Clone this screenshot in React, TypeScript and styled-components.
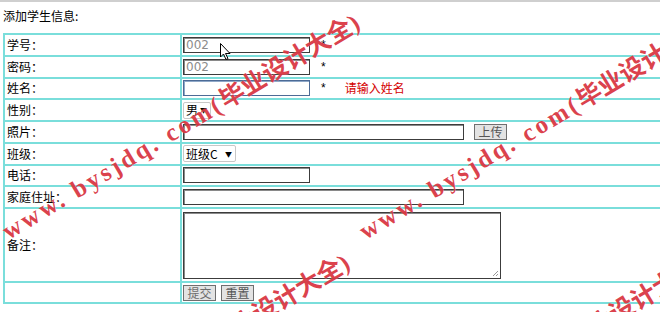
import React from "react";
import styled, { createGlobalStyle } from "styled-components";

const lineColor = "#7adedb";
const cjk = `"Noto Sans CJK SC", "Liberation Sans", sans-serif`;

const GlobalStyle = createGlobalStyle`
  html, body {
    margin: 0;
    padding: 0;
    background: #fff;
    overflow: hidden;
  }
  body {
    font-family: ${cjk};
    font-size: 12px;
    color: #000;
  }
`;

const Page = styled.div`
  position: relative;
  width: 660px;
  height: 312px;
  overflow: hidden;
  border-top: 2px solid #cfcfcf;
  box-sizing: border-box;
  padding-left: 3px;
`;

const Title = styled.div`
  height: 31px;
  line-height: 28px;
  font-size: 12px;
`;

const FormTable = styled.table`
  width: 820px;
  border: 1px solid ${lineColor};
  border-spacing: 0;
  border-collapse: separate;
`;

const Row = styled.tr<{ $h?: number }>`
  height: ${(p) => p.$h ?? 21.75}px;
`;

const LabelCell = styled.td`
  width: 173px;
  border: 1px solid ${lineColor};
  padding: 0 0 0 2px;
  font-size: 12px;
  vertical-align: middle;
  line-height: 14px;
`;

const FieldCell = styled.td`
  border: 1px solid ${lineColor};
  padding: 0 0 0 1px;
  vertical-align: middle;
  font-size: 12px;
  line-height: 14px;
`;

const Field = styled.div`
  display: flex;
  align-items: center;
`;

const TextBox = styled.div<{ $w: number; $blue?: boolean }>`
  width: ${(p) => p.$w}px;
  height: 16px;
  box-sizing: border-box;
  border: 1px solid ${(p) => (p.$blue ? "#4d6b96" : "#3c3c3c")};
  box-shadow: inset 1px 1px 0 ${(p) => (p.$blue ? "#8fa8c8" : "#8a8a8a")};
  background: #fff;
  color: #8c8c8c;
  font-size: 12px;
  line-height: 14px;
  padding-left: 2px;
  font-family: "DejaVu Sans", sans-serif;
`;

const Star = styled.span`
  margin-left: 11px;
  font-size: 12px;
  font-family: "Liberation Sans", sans-serif;
`;

const Error = styled.span`
  margin-left: 19px;
  color: #d40000;
  font-size: 12px;
`;

const SelectBox = styled.div<{ $w: number }>`
  display: inline-flex;
  align-items: center;
  justify-content: space-between;
  width: ${(p) => p.$w}px;
  height: 17px;
  box-sizing: border-box;
  border: 1px solid #c8c8c8;
  border-radius: 2px;
  background: #fff;
  padding: 0 3px 0 2px;
  font-size: 12px;
`;

const Arrow = styled.span`
  font-size: 7px;
  line-height: 8px;
`;

const Btn = styled.div<{ $muted?: boolean }>`
  display: inline-flex;
  align-items: center;
  justify-content: center;
  width: 33px;
  height: 16px;
  box-sizing: border-box;
  border: 1px solid #6f6f6f;
  background: #e3e3e3;
  color: ${(p) => (p.$muted ? "#6d6d6d" : "#555")};
  font-size: 12px;
`;

const Memo = styled.div`
  position: relative;
  width: 318px;
  height: 67px;
  box-sizing: border-box;
  border: 1px solid #3c3c3c;
  box-shadow: inset 1px 1px 0 #8a8a8a;
  background: #fff;
`;

const Grip = styled.svg`
  position: absolute;
  right: 1px;
  bottom: 1px;
`;

const Buttons = styled.div`
  display: flex;
  gap: 5px;
  padding-top: 1px;
`;

const Mark = styled.div<{ $x: number; $y: number }>`
  position: absolute;
  left: ${(p) => p.$x}px;
  top: ${(p) => p.$y}px;
  transform: rotate(-31deg);
  transform-origin: 0 100%;
  white-space: nowrap;
  color: rgba(214, 40, 52, 0.88);
  font-family: "Liberation Serif", "Noto Sans CJK SC", serif;
  font-weight: bold;
  font-size: 25px;
  line-height: 30px;
  pointer-events: none;
  text-shadow: 0 0 1px rgba(255, 255, 255, 0.6);
`;

const Latin = styled.span`
  letter-spacing: 3px;
`;

const Cursor = styled.svg`
  position: absolute;
  left: 220px;
  top: 41px;
`;

const marks = [
  { x: 12, y: 214 },
  { x: 369, y: 214 },
  { x: 2, y: 454 },
  { x: 359, y: 454 },
];

export default function App() {
  return (
    <>
      <GlobalStyle />
      <Page>
        <Title>添加学生信息:</Title>
        <FormTable>
          <tbody>
            <Row>
              <LabelCell>学号：</LabelCell>
              <FieldCell>
                <Field>
                  <TextBox $w={127}>002</TextBox>
                  <Star>*</Star>
                </Field>
              </FieldCell>
            </Row>
            <Row>
              <LabelCell>密码：</LabelCell>
              <FieldCell>
                <Field>
                  <TextBox $w={127}>002</TextBox>
                  <Star>*</Star>
                </Field>
              </FieldCell>
            </Row>
            <Row>
              <LabelCell>姓名：</LabelCell>
              <FieldCell>
                <Field>
                  <TextBox $w={127} $blue />
                  <Star>*</Star>
                  <Error>请输入姓名</Error>
                </Field>
              </FieldCell>
            </Row>
            <Row>
              <LabelCell>性别：</LabelCell>
              <FieldCell>
                <Field>
                  <SelectBox $w={28}>
                    男<Arrow>▼</Arrow>
                  </SelectBox>
                </Field>
              </FieldCell>
            </Row>
            <Row>
              <LabelCell>照片：</LabelCell>
              <FieldCell>
                <Field>
                  <TextBox $w={281} />
                  <Btn style={{ marginLeft: 10 }}>上传</Btn>
                </Field>
              </FieldCell>
            </Row>
            <Row>
              <LabelCell>班级：</LabelCell>
              <FieldCell>
                <Field>
                  <SelectBox $w={53}>
                    班级C<Arrow>▼</Arrow>
                  </SelectBox>
                </Field>
              </FieldCell>
            </Row>
            <Row>
              <LabelCell>电话：</LabelCell>
              <FieldCell>
                <Field>
                  <TextBox $w={127} />
                </Field>
              </FieldCell>
            </Row>
            <Row>
              <LabelCell>家庭住址：</LabelCell>
              <FieldCell>
                <Field>
                  <TextBox $w={281} />
                </Field>
              </FieldCell>
            </Row>
            <Row $h={74}>
              <LabelCell>备注：</LabelCell>
              <FieldCell>
                <Memo>
                  <Grip width="7" height="7" viewBox="0 0 7 7">
                    <path d="M6 1 L1 6 M6 4 L4 6" stroke="#999" strokeWidth="1" />
                  </Grip>
                </Memo>
              </FieldCell>
            </Row>
            <Row $h={21}>
              <LabelCell />
              <FieldCell>
                <Buttons>
                  <Btn $muted>提交</Btn>
                  <Btn>重置</Btn>
                </Buttons>
              </FieldCell>
            </Row>
          </tbody>
        </FormTable>
        {marks.map((m, i) => (
          <Mark key={i} $x={m.x} $y={m.y}>
            <Latin>www. bysjdq. com(</Latin>毕业设计大全)
          </Mark>
        ))}
        <Cursor width="12" height="18" viewBox="0 0 12 18">
          <path
            d="M0.5 0.5 L0.5 14 L3.5 11 L6 16.5 L8 15.5 L5.5 10.5 L10 10.5 Z"
            fill="#fff"
            stroke="#000"
            strokeWidth="1"
          />
        </Cursor>
      </Page>
    </>
  );
}
